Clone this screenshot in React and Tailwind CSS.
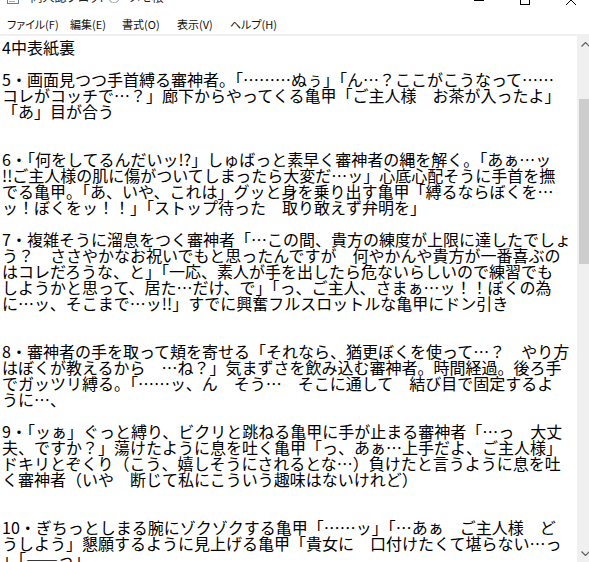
import React from 'react';

const lines = [
    '4中表紙裏',
    '',
    '5・画面見つつ手首縛る審神者。「………ぬぅ」「ん…？ここがこうなって……',
    'コレがコッチで…？」廊下からやってくる亀甲「ご主人様　お茶が入ったよ」',
    '「あ」目が合う',
    '',
    '',
    '6・「何をしてるんだいッ!?」しゅばっと素早く審神者の縄を解く。「あぁ…ッ',
    '!!ご主人様の肌に傷がついてしまったら大変だ…ッ」心底心配そうに手首を撫',
    'でる亀甲。「あ、いや、これは」グッと身を乗り出す亀甲「縛るならぼくを…',
    'ッ！ぼくをッ！！」「ストップ待った　取り敢えず弁明を」',
    '',
    '7・複雑そうに溜息をつく審神者「…この間、貴方の練度が上限に達したでしょ',
    'う？　ささやかなお祝いでもと思ったんですが　何やかんや貴方が一番喜ぶの',
    'はコレだろうな、と」「一応、素人が手を出したら危ないらしいので練習でも',
    'しようかと思って、居た…だけ、で」「っ、ご主人、さまぁ…ッ！！ぼくの為',
    'に…ッ、そこまで…ッ!!」すでに興奮フルスロットルな亀甲にドン引き',
    '',
    '',
    '8・審神者の手を取って頬を寄せる「それなら、猶更ぼくを使って…？　やり方',
    'はぼくが教えるから　…ね？」気まずさを飲み込む審神者。時間経過。後ろ手',
    'でガッツリ縛る。「……ッ、ん　そう…　そこに通して　結び目で固定するよ',
    'うに…、',
    '',
    '9・「ッぁ」ぐっと縛り、ビクリと跳ねる亀甲に手が止まる審神者「…っ　大丈',
    '夫、ですか？」蕩けたように息を吐く亀甲「っ、あぁ…上手だよ、ご主人様」',
    'ドキリとぞくり（こう、嬉しそうにされるとな…）負けたと言うように息を吐',
    'く審神者（いや　断じて私にこういう趣味はないけれど）',
    '',
    '',
    '10・ぎちっとしまる腕にゾクゾクする亀甲「……ッ」「…あぁ　ご主人様　ど',
    'うしよう」懇願するように見上げる亀甲「貴女に　口付けたくて堪らない…っ',
    '」「――っ」',
];

// メニュー項目（左端 7, 70, 122, 177, 230px）
const menus = [
    { label: 'ファイル(F)', w: 'w-[63px]' },
    { label: '編集(E)', w: 'w-[52px]' },
    { label: '書式(O)', w: 'w-[55px]' },
    { label: '表示(V)', w: 'w-[53px]' },
    { label: 'ヘルプ(H)', w: 'w-[60px]' },
];

const App = () => {
    return (
        <div className="w-[589px] h-[562px] overflow-hidden bg-white">
            <div className="w-[594px] h-[562px] flex flex-col font-['Noto_Sans_CJK_JP',sans-serif] text-black">
                {/* タイトルバー（上が切れている） */}
                <div className="h-[14px] overflow-hidden shrink-0">
                    <div className="-mt-[18px] h-[30px] flex items-center">
                        <svg width="12" height="14" viewBox="0 0 12 14" className="ml-[7px]">
                            <rect x="0.5" y="0.5" width="11" height="13" fill="#fff" stroke="#5b7fa8" />
                            <rect x="2" y="9" width="8" height="1" fill="#9bb3cc" />
                            <rect x="2" y="11" width="6" height="1" fill="#9bb3cc" />
                        </svg>
                        <span className="ml-[6px] text-[12px] text-[#222] [font-feature-settings:'palt']">*同人誌プロット② - メモ帳</span>
                        <div className="ml-auto flex h-full translate-y-[3px]">
                            <div className="w-[46px] flex items-center justify-center">
                                <div className="w-[10px] h-px bg-black" />
                            </div>
                            <div className="w-[46px] flex items-center justify-center">
                                <div className="w-[10px] h-[10px] border border-black" />
                            </div>
                            <div className="w-[46px] flex items-center justify-center">
                                <svg width="10" height="10" viewBox="0 0 10 10">
                                    <path d="M0 0 L10 10 M10 0 L0 10" stroke="#000" strokeWidth="1" />
                                </svg>
                            </div>
                        </div>
                    </div>
                </div>
                {/* メニューバー */}
                <div className="h-[20px] shrink-0 flex items-center pl-[7px] text-[11px] text-[#111] leading-none [font-feature-settings:'palt']">
                    {menus.map(m => (
                        <span key={m.label} className={m.w}>{m.label}</span>
                    ))}
                </div>
                <div className="h-[2px] shrink-0 bg-[#f0f0f0]" />
                {/* 本文 + スクロールバー */}
                <div className="flex-1 flex min-h-0">
                    <div className="flex-1 overflow-hidden pt-[3px] pl-[2px]">
                        {lines.map((l, i) => (
                            <div key={i} className="h-[16px] leading-[16px] text-[16px] whitespace-nowrap">
                                {l || '\u00a0'}
                            </div>
                        ))}
                    </div>
                    <div className="w-[17px] shrink-0 bg-[#f0f0f0] flex flex-col">
                        <div className="h-[17px] flex items-center justify-center">
                            <svg width="9" height="5" viewBox="0 0 9 5">
                                <path d="M0.5 4.5 L4.5 0.5 L8.5 4.5" fill="none" stroke="#606060" strokeWidth="1.2" />
                            </svg>
                        </div>
                        <div className="h-[46px]" />
                        <div className="h-[165px] mx-[2px] bg-[#cdcdcd]" />
                        <div className="flex-1" />
                        <div className="h-[17px] flex items-center justify-center">
                            <svg width="9" height="5" viewBox="0 0 9 5">
                                <path d="M0.5 0.5 L4.5 4.5 L8.5 0.5" fill="none" stroke="#606060" strokeWidth="1.2" />
                            </svg>
                        </div>
                    </div>
                </div>
            </div>
        </div>
    );
};

export default App;
